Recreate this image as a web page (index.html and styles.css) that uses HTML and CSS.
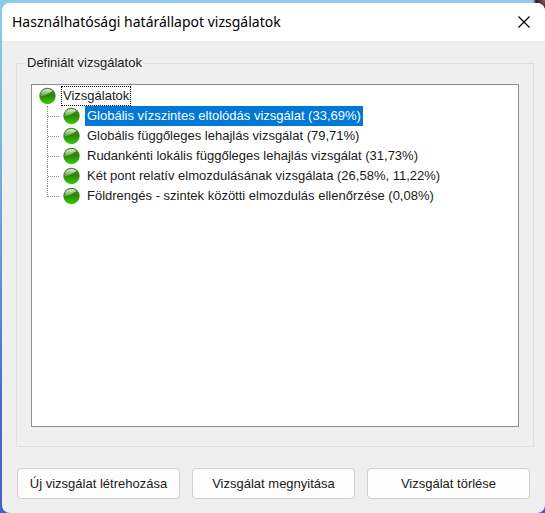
FILE: index.html
```html
<!DOCTYPE html>
<html lang="hu">
<head>
<meta charset="utf-8">
<meta name="viewport" content="width=device-width, initial-scale=1">
<title>Használhatósági határállapot vizsgálatok</title>
<link rel="stylesheet" href="styles.css">
</head>
<body>
<svg class="defs" width="0" height="0" aria-hidden="true">
  <defs>
    <linearGradient id="ball" x1="0" y1="0" x2="0" y2="1">
      <stop offset="0" stop-color="#4a8f2c"/>
      <stop offset="0.45" stop-color="#2c8409"/>
      <stop offset="1" stop-color="#35cc08"/>
    </linearGradient>
    <linearGradient id="gloss" x1="0" y1="0" x2="0" y2="1">
      <stop offset="0" stop-color="#fff" stop-opacity="0.85"/>
      <stop offset="1" stop-color="#fff" stop-opacity="0.2"/>
    </linearGradient>
    <symbol id="status-ok" viewBox="0 0 18 18">
      <circle cx="8.5" cy="9" r="8.2" fill="url(#ball)"/>
      <path d="M1.4 9.2A7.2 7.2 0 0 1 13.6 4C10.5 5 8.5 8.8 1.4 9.2Z" fill="url(#gloss)"/>
    </symbol>
  </defs>
</svg>
<main class="dialog">
  <header class="titlebar">
    <h1 class="title">Használhatósági határállapot vizsgálatok</h1>
    <button class="close" type="button" aria-label="Bezárás">
      <svg width="12" height="12" viewBox="0 0 12 12"><path d="M0.5 0.5L11.5 11.5M11.5 0.5L0.5 11.5" stroke="#000" stroke-width="1.2" fill="none"/></svg>
    </button>
  </header>
  <fieldset class="group">
    <legend class="legend">Definiált vizsgálatok</legend>
    <div class="tree" role="tree" aria-label="Definiált vizsgálatok">
      <div class="node" role="treeitem" aria-expanded="true">
        <svg class="icon"><use href="#status-ok"/></svg><span class="label focused">Vizsgálatok</span>
      </div>
      <ul class="children" role="group">
        <li class="node child" role="treeitem" aria-selected="true"><svg class="icon"><use href="#status-ok"/></svg><span class="label selected">Globális vízszintes eltolódás vizsgálat (33,69%)</span></li>
        <li class="node child" role="treeitem"><svg class="icon"><use href="#status-ok"/></svg><span class="label">Globális függőleges lehajlás vizsgálat (79,71%)</span></li>
        <li class="node child" role="treeitem"><svg class="icon"><use href="#status-ok"/></svg><span class="label">Rudankénti lokális függőleges lehajlás vizsgálat (31,73%)</span></li>
        <li class="node child" role="treeitem"><svg class="icon"><use href="#status-ok"/></svg><span class="label">Két pont relatív elmozdulásának vizsgálata (26,58%, 11,22%)</span></li>
        <li class="node child" role="treeitem"><svg class="icon"><use href="#status-ok"/></svg><span class="label">Földrengés - szintek közötti elmozdulás ellenőrzése (0,08%)</span></li>
      </ul>
    </div>
  </fieldset>
  <footer class="actions">
    <button class="action" type="button">Új vizsgálat létrehozása</button>
    <button class="action" type="button">Vizsgálat megnyitása</button>
    <button class="action" type="button">Vizsgálat törlése</button>
  </footer>
</main>
</body>
</html>
```
FILE: styles.css
```css
*,
*::before {
  box-sizing: border-box;
}

body {
  display: flex;
  min-height: 100vh;
  margin: 0;
  padding: 3px 0 0 2px;
  background:
    radial-gradient(circle at 100% 0, #a05a5c 0, #2a1c20 9px, transparent 12px),
    linear-gradient(#8ccbe9, #78b4e2 30%, #4a68c8 80%, #4362c6);
  color: #1a1a1a;
  font: 13px/16px "Liberation Sans", Arial, sans-serif;
}

.defs {
  position: absolute;
}

.dialog {
  display: flex;
  flex: 1;
  flex-direction: column;
  overflow: hidden;
  border-radius: 8px;
  background: #efefef;
}

.titlebar {
  display: flex;
  align-items: center;
  justify-content: space-between;
  height: 38px;
  padding: 0 9px 0 10px;
  background: #fff;
}

.title {
  margin: 0;
  color: #000;
  font: 400 14px/20px "Noto Sans", "Segoe UI", sans-serif;
}

.close {
  display: flex;
  padding: 6px;
  border: 0;
  background: none;
}

.group {
  display: flex;
  flex: 1;
  flex-direction: column;
  min-width: 0;
  margin: 14px 11px 0 14px;
  padding: 13px 14px 19px;
  border: 1px solid #dfdfdf;
}

.legend {
  margin-left: -6px;
  padding: 0 3px 0 2px;
}

.tree {
  flex: 1;
  padding: 1px 7px;
  border: 1px solid #8a8f9a;
  background: #fff;
}

.node {
  display: flex;
  align-items: center;
  gap: 4px;
  height: 20px;
}

.icon {
  flex: none;
  width: 18px;
  height: 18px;
}

.label {
  padding: 0 2px;
  line-height: 20px;
  white-space: nowrap;
}

.focused {
  padding: 0 1px;
  border: 1px dotted #000;
  line-height: 18px;
}

.selected {
  background: #0078d7;
  color: #fff;
}

.children {
  margin: 0 0 0 8px;
  padding: 0;
  list-style: none;
}

.child {
  border-left: 1px dotted #8c8c8c;
}

.child::before {
  content: "";
  align-self: flex-start;
  width: 11px;
  height: 11px;
  border-bottom: 1px dotted #8c8c8c;
}

.child:last-child {
  border-left: 0;
}

.child:last-child::before {
  width: 12px;
  border-left: 1px dotted #8c8c8c;
}

.actions {
  display: grid;
  grid-template-columns: repeat(3, 1fr);
  gap: 12px;
  padding: 21px 15px 14px;
}

.action {
  height: 31px;
  padding: 0 4px;
  border: 1px solid #d0d0d0;
  border-radius: 4px;
  background: #fdfdfd;
  color: #1a1a1a;
  font: inherit;
}
```
